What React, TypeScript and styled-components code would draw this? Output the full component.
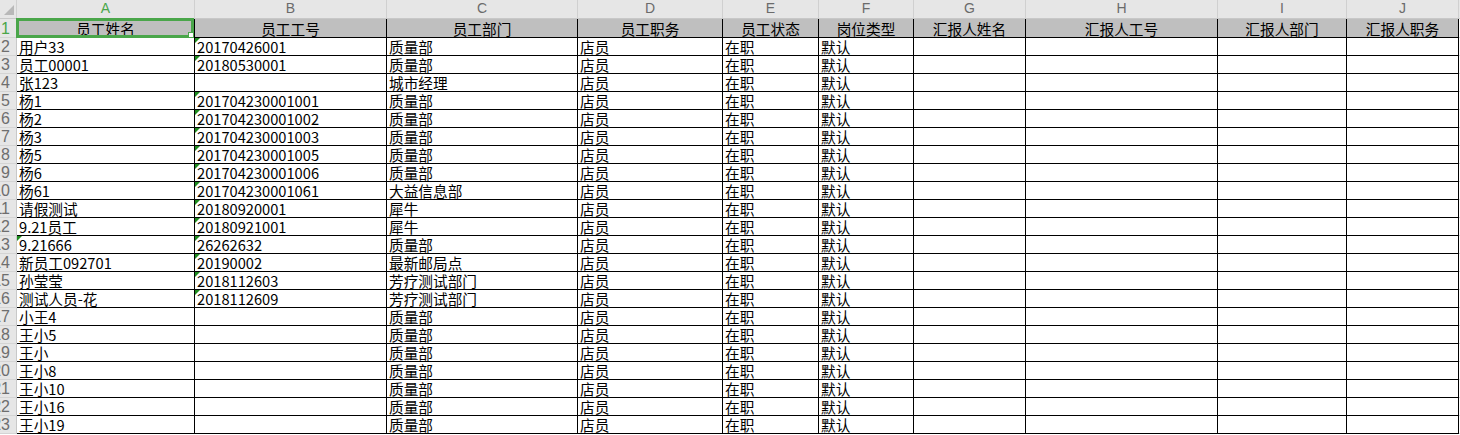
import React from "react";
import styled, { createGlobalStyle } from "styled-components";

const GlobalStyle = createGlobalStyle`
  html, body { margin: 0; padding: 0; background: #ffffff; }
  body { font-family: "Noto Sans CJK SC", "Liberation Sans", sans-serif; }
  * { box-sizing: border-box; }
`;

const COLS = [178, 192, 191, 145, 96, 95, 112, 192, 129, 112];
const LETTERS = ["A", "B", "C", "D", "E", "F", "G", "H", "I", "J"];
const GREEN = "#4aa64a";

const Sheet = styled.div`
  display: grid;
  grid-template-columns: 17px ${COLS.map((w) => `${w}px`).join(" ")} 1fr;
  grid-template-rows: 19px 19px repeat(22, 18px);
  width: 1460px;
  height: 435px;
  overflow: hidden;
  background: #ffffff;
`;

const Corner = styled.div`
  background: #e6e6e6;
  border-right: 1px solid #d0d0d0;
  border-bottom: 1px solid #c8c8c8;
  display: flex;
  justify-content: flex-end;
  align-items: flex-end;
  padding: 0 2px 3px 0;
`;

const CornerTriangle = styled.span`
  width: 0;
  height: 0;
  border-left: 10px solid transparent;
  border-bottom: 10px solid #b8b8b8;
`;

const ColHead = styled.div<{ $active?: boolean }>`
  background: #e6e6e6;
  border-right: 1px solid #d0d0d0;
  border-bottom: 1px solid #c8c8c8;
  display: flex;
  justify-content: center;
  align-items: flex-start;
  font-family: "Liberation Sans", Arial, sans-serif;
  font-size: 14px;
  line-height: 17px;
  color: ${(p) => (p.$active ? GREEN : "#6b6b6b")};
`;

const RowHead = styled.div<{ $active?: boolean }>`
  background: #e6e6e6;
  border-right: 1px solid #c8c8c8;
  border-bottom: 1px solid #d4d4d4;
  display: flex;
  justify-content: flex-end;
  align-items: flex-end;
  padding-right: 6px;
  overflow: hidden;
  white-space: nowrap;
  font-family: "Liberation Sans", Arial, sans-serif;
  font-size: 16px;
  line-height: 17px;
  color: ${(p) => (p.$active ? GREEN : "#6e6e6e")};
`;

const Cell = styled.div<{ $header?: boolean }>`
  position: relative;
  background: ${(p) => (p.$header ? "#bfbfbf" : "#ffffff")};
  border-right: 1px solid #000000;
  border-bottom: 1px solid #000000;
  display: flex;
  justify-content: ${(p) => (p.$header ? "center" : "flex-start")};
  align-items: flex-end;
  padding-left: ${(p) => (p.$header ? "0" : "2px")};
  white-space: nowrap;
  font-size: 14.67px;
  line-height: 17px;
  color: #000000;
`;

const Filler = styled.div<{ $top?: boolean }>`
  background: ${(p) => (p.$top ? "#e6e6e6" : "#ffffff")};
  border-bottom: 1px solid ${(p) => (p.$top ? "#c8c8c8" : "#d8d8d8")};
`;

const Flag = styled.span`
  position: absolute;
  top: 0;
  left: 0;
  width: 0;
  height: 0;
  border-top: 5px solid #1f8c1f;
  border-right: 5px solid transparent;
`;

const Selection = styled.div`
  position: absolute;
  top: -1px;
  left: -1px;
  right: 0;
  bottom: -1px;
  border: 3px solid ${GREEN};
  z-index: 3;
  pointer-events: none;
`;

const Handle = styled.span`
  position: absolute;
  right: -3px;
  bottom: -3px;
  width: 6px;
  height: 6px;
  background: #ffffff;
  border: 1px solid ${GREEN};
`;

const HEADERS = [
  "员工姓名",
  "员工工号",
  "员工部门",
  "员工职务",
  "员工状态",
  "岗位类型",
  "汇报人姓名",
  "汇报人工号",
  "汇报人部门",
  "汇报人职务",
];

type Row = { name: string; id: string; dept: string; flagName?: boolean };

const ROWS: Row[] = [
  { name: "用户33", id: "20170426001", dept: "质量部" },
  { name: "员工00001", id: "20180530001", dept: "质量部" },
  { name: "张123", id: "", dept: "城市经理" },
  { name: "杨1", id: "201704230001001", dept: "质量部" },
  { name: "杨2", id: "201704230001002", dept: "质量部" },
  { name: "杨3", id: "201704230001003", dept: "质量部" },
  { name: "杨5", id: "201704230001005", dept: "质量部" },
  { name: "杨6", id: "201704230001006", dept: "质量部" },
  { name: "杨61", id: "201704230001061", dept: "大益信息部" },
  { name: "请假测试", id: "20180920001", dept: "犀牛" },
  { name: "9.21员工", id: "20180921001", dept: "犀牛" },
  { name: "9.21666", id: "26262632", dept: "质量部", flagName: true },
  { name: "新员工092701", id: "20190002", dept: "最新邮局点" },
  { name: "孙莹莹", id: "2018112603", dept: "芳疗测试部门" },
  { name: "测试人员-花", id: "2018112609", dept: "芳疗测试部门" },
  { name: "小王4", id: "", dept: "质量部" },
  { name: "王小5", id: "", dept: "质量部" },
  { name: "王小", id: "", dept: "质量部" },
  { name: "王小8", id: "", dept: "质量部" },
  { name: "王小10", id: "", dept: "质量部" },
  { name: "王小16", id: "", dept: "质量部" },
  { name: "王小19", id: "", dept: "质量部" },
];

export default function App() {
  return (
    <>
      <GlobalStyle />
      <Sheet>
        <Corner>
          <CornerTriangle />
        </Corner>
        {LETTERS.map((l, i) => (
          <ColHead key={l} $active={i === 0}>
            {l}
          </ColHead>
        ))}
        <Filler $top />

        <RowHead $active>1</RowHead>
        {HEADERS.map((h, i) => (
          <Cell key={h} $header>
            {h}
            {i === 0 && (
              <Selection>
                <Handle />
              </Selection>
            )}
          </Cell>
        ))}
        <Filler />

        {ROWS.map((r, idx) => {
          const values = [r.name, r.id, r.dept, "店员", "在职", "默认", "", "", "", ""];
          return (
            <React.Fragment key={idx}>
              <RowHead>{idx + 2}</RowHead>
              {values.map((v, ci) => (
                <Cell key={ci}>
                  {((ci === 1 && r.id) || (ci === 0 && r.flagName)) && <Flag />}
                  {v}
                </Cell>
              ))}
              <Filler />
            </React.Fragment>
          );
        })}
      </Sheet>
    </>
  );
}
